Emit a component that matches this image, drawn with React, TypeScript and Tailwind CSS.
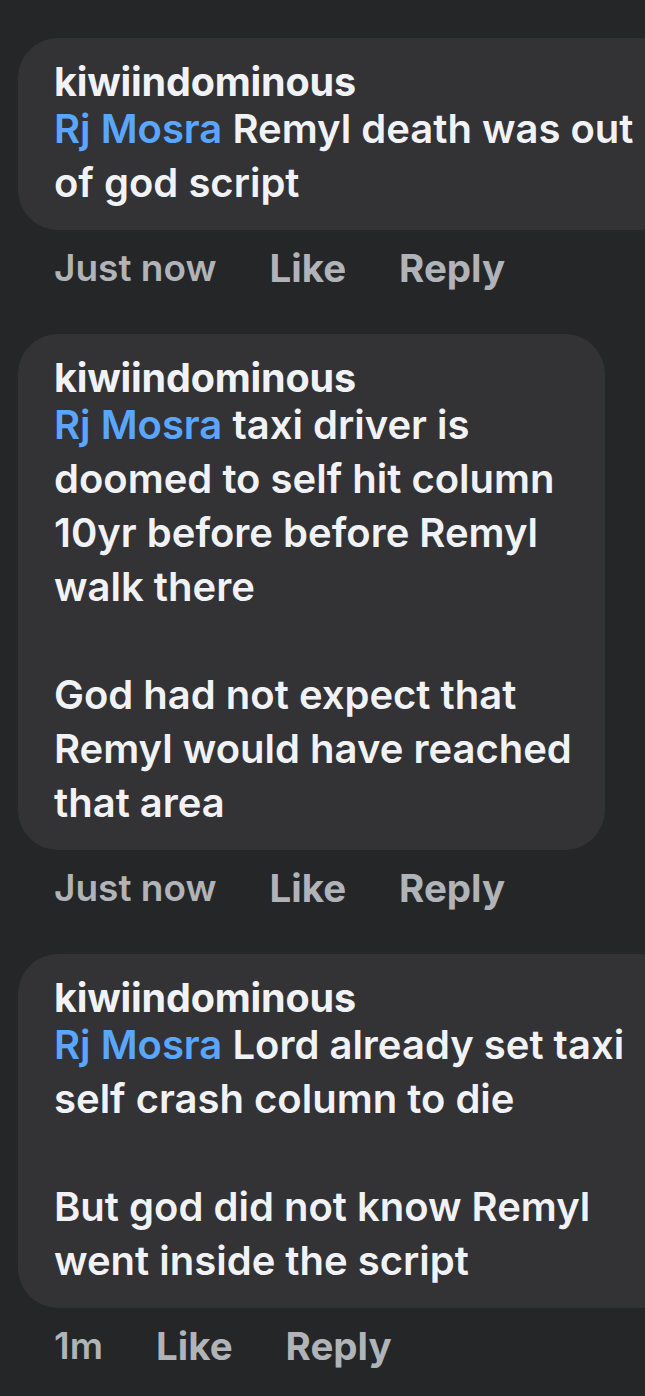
import React from "react";

type Comment = {
  author: string;
  mention: string;
  lines: string[];
  time: string;
  width: string;
};

const comments: Comment[] = [
  {
    author: "kiwiindominous",
    mention: "Rj Mosra",
    lines: ["Remyl death was out", "of god script"],
    time: "Just now",
    width: "w-[660px]",
  },
  {
    author: "kiwiindominous",
    mention: "Rj Mosra",
    lines: [
      "taxi driver is",
      "doomed to self hit column",
      "10yr before before Remyl",
      "walk there",
      "",
      "God had not expect that",
      "Remyl would have reached",
      "that area",
    ],
    time: "Just now",
    width: "w-[587px]",
  },
  {
    author: "kiwiindominous",
    mention: "Rj Mosra",
    lines: [
      "Lord already set taxi",
      "self crash column to die",
      "",
      "But god did not know Remyl",
      "went inside the script",
    ],
    time: "1m",
    width: "w-[660px]",
  },
];

function CommentItem({ c }: { c: Comment }) {
  return (
    <div className="flex flex-col">
      <div className={`${c.width} shrink-0 rounded-[40px] bg-[#333336] pb-5 pl-9 pr-9 pt-6`}>
        <div className="text-[39.5px] font-bold leading-[40px] tracking-[-0.2px] text-[#f1f2f5]">{c.author}</div>
        <div className="text-[40px] font-semibold leading-[54px] text-[#f1f2f5]">
          {c.lines.map((line, i) => (
            <div key={i} className="h-[54px] whitespace-nowrap">
              {i === 0 && <span className="text-[#5aa6ff]">{c.mention} </span>}
              {line}
            </div>
          ))}
        </div>
      </div>
      <div className="mt-[18px] flex items-center gap-[53px] pl-9 text-[38.5px] font-bold leading-[40px] text-[#b0b3b8]">
        <span className="text-[37px] font-semibold">{c.time}</span>
        <span>Like</span>
        <span>Reply</span>
      </div>
    </div>
  );
}

export default function App(): React.JSX.Element {
  return (
    <div
      className="min-h-[1396px] w-[645px] overflow-hidden bg-[#252628] pl-[18px] pt-[38px]"
      style={{ fontFamily: "Inter, 'Noto Sans', sans-serif" }}
    >
      <div className="flex flex-col gap-[46px]">
        {comments.map((c, i) => (
          <CommentItem key={i} c={c} />
        ))}
      </div>
    </div>
  );
}
